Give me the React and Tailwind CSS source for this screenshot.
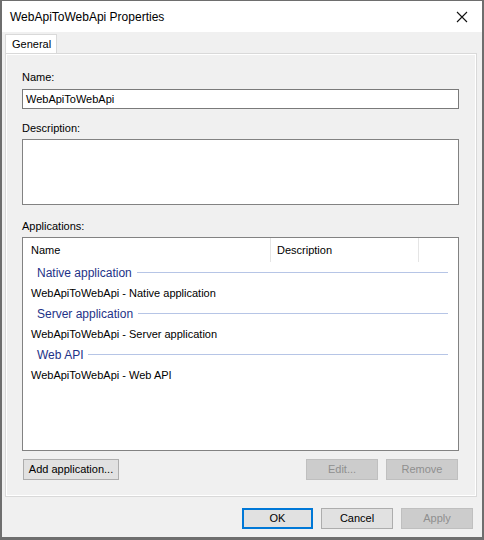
import React from "react";

const groups = [
  { title: "Native application", item: "WebApiToWebApi - Native application" },
  { title: "Server application", item: "WebApiToWebApi - Server application" },
  { title: "Web API", item: "WebApiToWebApi - Web API" },
];

function WinButton({ children, width, disabled, primary }) {
  let cls = "h-[21px] flex items-center justify-center border bg-[#e1e1e1] border-[#adadad] text-black";
  if (disabled) cls = "h-[21px] flex items-center justify-center border bg-[#cccccc] border-[#bfbfbf] text-[#8f8f8f]";
  if (primary) cls = "h-[21px] flex items-center justify-center border-2 bg-[#e1e1e1] border-[#0078d7] text-black";
  return (
    <div className={cls} style={{ width }}>
      {children}
    </div>
  );
}

export default function App() {
  return (
    <div className="w-[484px] h-[540px] bg-[#f0f0f0] border-t border-x-2 border-b-[3px] border-[#6e6e6e] flex flex-col font-['Liberation_Sans',sans-serif] text-[11px] text-black overflow-hidden">
      {/* Title bar */}
      <div className="h-[31px] bg-white flex items-center justify-between shrink-0">
        <span className="pl-[8px] text-[12px] leading-none">WebApiToWebApi Properties</span>
        <svg width="12" height="12" viewBox="0 0 12 12" className="mr-[14px]">
          <path d="M1 1 L11 11 M11 1 L1 11" stroke="#111" strokeWidth="1.1" />
        </svg>
      </div>

      {/* Tab strip */}
      <div className="pl-[3px] pt-[2px] flex shrink-0">
        <div className="h-[19px] w-[52px] bg-white border border-b-0 border-[#d9d9d9] flex items-center pl-[6px]">
          General
        </div>
      </div>

      {/* Tab panel */}
      <div className="ml-[3px] mr-[5px] h-[444px] border border-[#d9d9d9] bg-[#f0f0f0] shrink-0">
        <div className="h-full border border-white flex flex-col pl-[15px] pr-[16px] pt-[15px]">
          <div className="h-[15px] leading-[15px]">Name:</div>
          <div className="mt-[4px] h-[20px] bg-white border border-[#7a7a7a] flex items-center pl-[3px]">
            WebApiToWebApi
          </div>

          <div className="mt-[12px] h-[15px] leading-[15px]">Description:</div>
          <div className="mt-[3px] h-[66px] bg-white border border-[#828282]" />

          <div className="mt-[14px] h-[15px] leading-[15px]">Applications:</div>
          <div className="mt-[3px] h-[214px] bg-white border border-[#828282] flex flex-col">
            <div className="h-[24px] flex shrink-0">
              <div className="w-[248px] border-r border-[#e5e5e5] flex items-center pl-[8px]">Name</div>
              <div className="w-[148px] border-r border-[#e5e5e5] flex items-center pl-[6px]">Description</div>
            </div>
            {groups.map((g) => (
              <div key={g.title}>
                <div className="h-[21px] flex items-center pl-[14px] pr-[10px]">
                  <span className="text-[12px] text-[#1e3287]">{g.title}</span>
                  <div className="flex-1 ml-[5px] h-px bg-[#b6c5e6]" />
                </div>
                <div className="h-[20px] flex items-center pl-[8px]">{g.item}</div>
              </div>
            ))}
          </div>

          <div className="mt-[8px] flex items-center">
            <div className="ml-[1px]">
              <WinButton width={96}>Add application...</WinButton>
            </div>
            <div className="flex-1" />
            <WinButton width={72} disabled>Edit...</WinButton>
            <div className="w-[8px]" />
            <WinButton width={72} disabled>Remove</WinButton>
            <div className="w-[1px]" />
          </div>
        </div>
      </div>

      {/* Dialog buttons */}
      <div className="mt-[11px] flex justify-end pr-[9px] gap-[8px] shrink-0">
        <WinButton width={71} primary>OK</WinButton>
        <WinButton width={72}>Cancel</WinButton>
        <WinButton width={72} disabled>Apply</WinButton>
      </div>
    </div>
  );
}
